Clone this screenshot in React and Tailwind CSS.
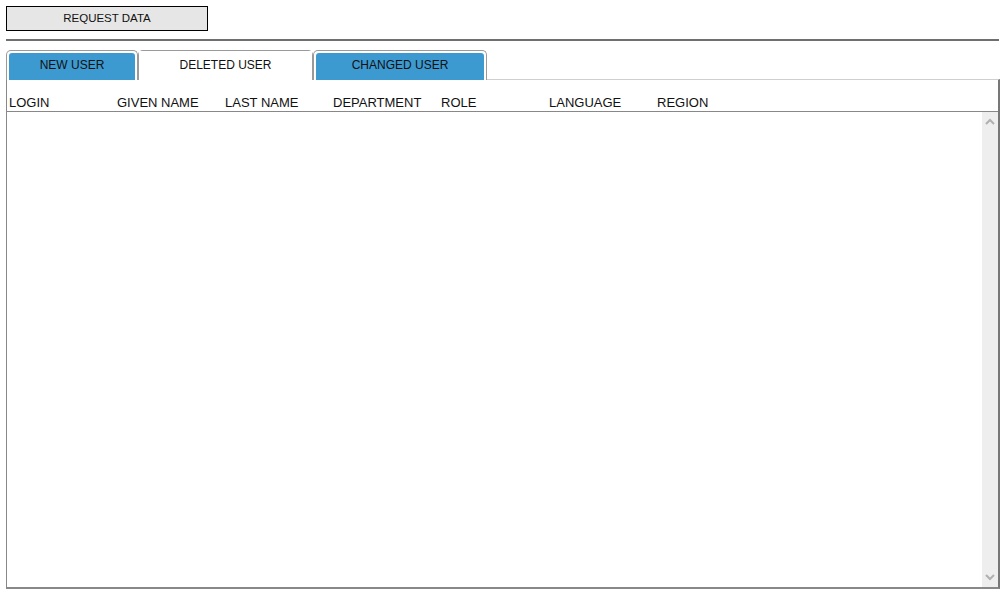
export default function App() {
  const columns = ['LOGIN', 'GIVEN NAME', 'LAST NAME', 'DEPARTMENT', 'ROLE', 'LANGUAGE', 'REGION']
  const tabs = [
    { label: 'NEW USER', width: 'w-[132px]', active: false },
    { label: 'DELETED USER', width: 'w-[175px]', active: true },
    { label: 'CHANGED USER', width: 'w-[174px]', active: false },
  ]

  return (
    <div className="h-[593px] w-[1007px] bg-white text-[#111] font-['Liberation_Sans',Arial,sans-serif] overflow-hidden">
      {/* top button */}
      <div className="pl-[6px] pt-[6px]">
        <button className="flex h-[25px] w-[202px] items-center justify-center border border-black bg-[#e6e6e6] text-[11.5px] leading-none">
          REQUEST DATA
        </button>
      </div>

      {/* separator */}
      <div className="ml-[6px] mt-[8px] h-[2px] w-[993px] bg-[#6f6f6f]" />

      {/* tabs */}
      <div className="ml-[6px] mt-[9px] flex relative z-10 -mb-px">
        {tabs.map((tab) => (
          <div
            key={tab.label}
            className={`${tab.width} h-[30px] rounded-t-[5px] border border-b-0 border-[#9a9a9a] ${
              tab.active ? 'bg-white' : 'bg-white px-[2px] pt-[2px]'
            }`}
          >
            <div
              className={`flex h-full items-center justify-center text-[12px] leading-none ${
                tab.active ? 'bg-white pb-[2px]' : 'bg-[#3d9ad1] rounded-t-[3px] pb-[4px]'
              }`}
            >
              {tab.label}
            </div>
          </div>
        ))}
      </div>

      {/* table */}
      <div className="ml-[6px] flex h-[510px] w-[994px] flex-col border-l border-l-[#888] border-t border-t-[#cfcfcf] border-r-2 border-r-[#777] border-b-2 border-b-[#888]">
        <div className="flex h-[32px] shrink-0 border-b border-[#888] pl-[2px] pt-[15px]">
          {columns.map((c) => (
            <div key={c} className="w-[108px] text-[13px] leading-[15px]">
              {c}
            </div>
          ))}
        </div>
        <div className="flex flex-1">
          <div className="flex-1" />
          <div className="flex w-[16px] flex-col items-center justify-between bg-[#eeeeee] py-[6px]">
            <svg width="10" height="7" viewBox="0 0 10 7">
              <path d="M1 6 L5 2 L9 6" fill="none" stroke="#b0b0b0" strokeWidth="2" />
            </svg>
            <svg width="10" height="7" viewBox="0 0 10 7">
              <path d="M1 1 L5 5 L9 1" fill="none" stroke="#b0b0b0" strokeWidth="2" />
            </svg>
          </div>
        </div>
      </div>
    </div>
  )
}
